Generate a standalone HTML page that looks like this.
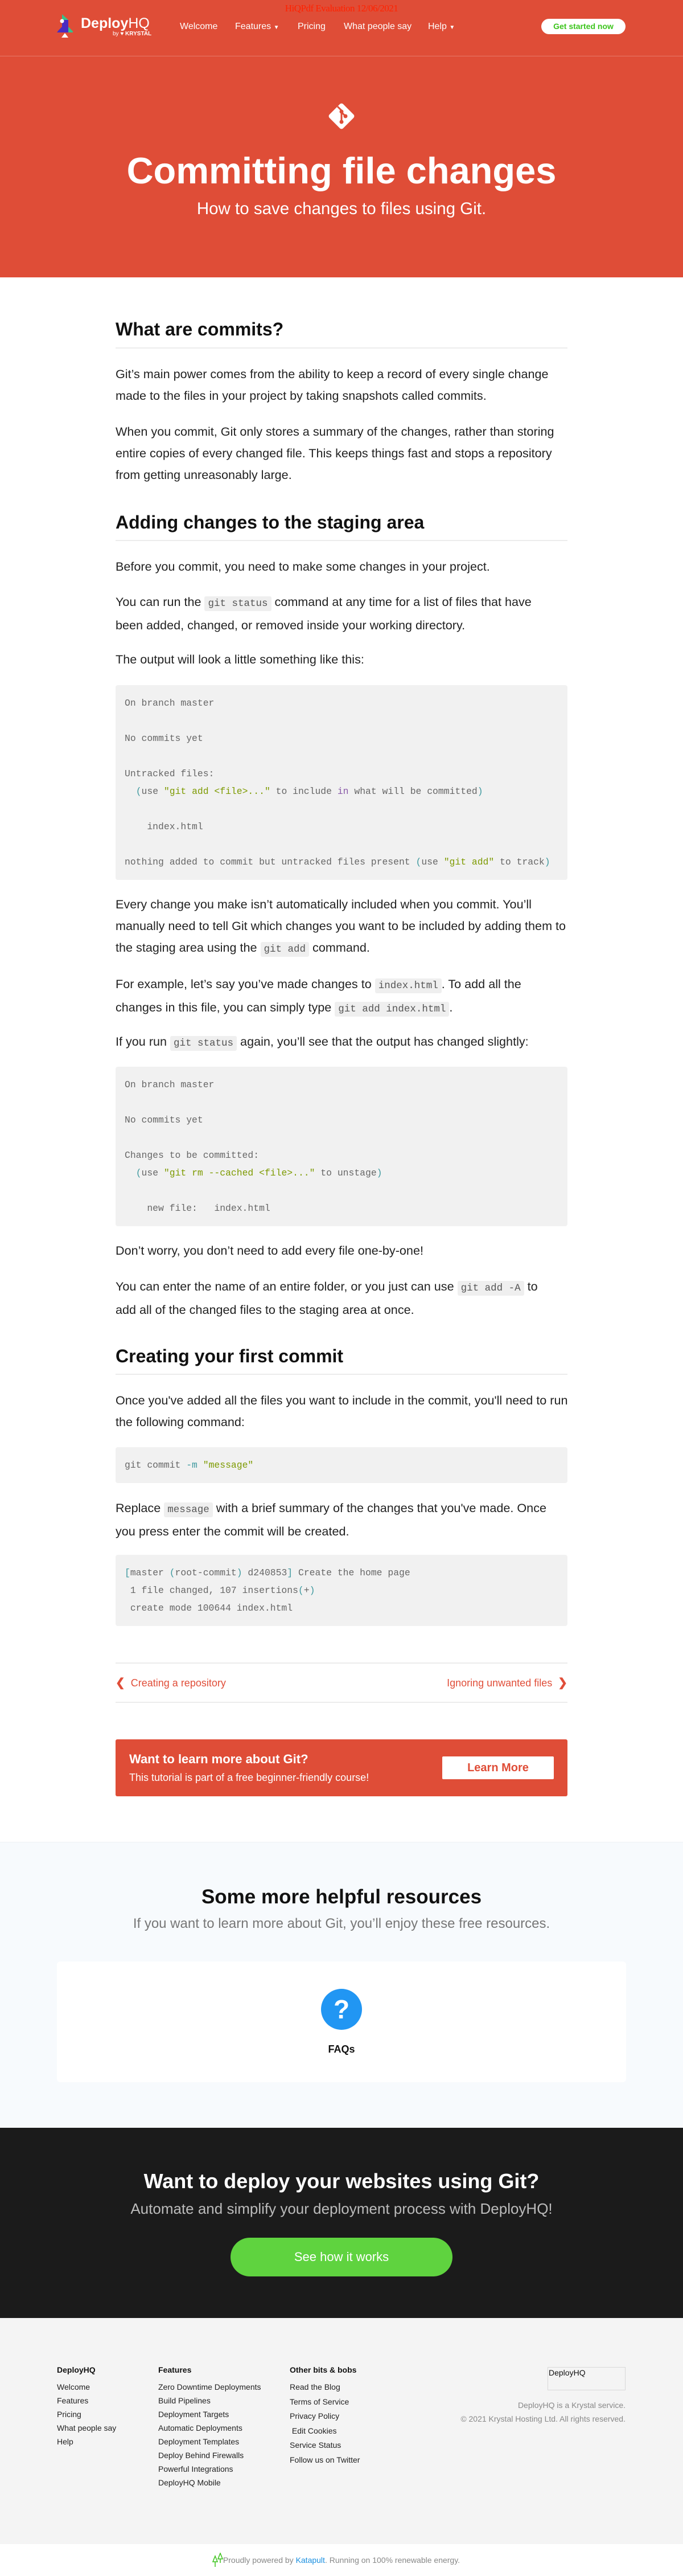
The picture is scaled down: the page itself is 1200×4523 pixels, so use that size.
<!DOCTYPE html>
<html><head><meta charset="utf-8">
<style>
*{margin:0;padding:0;box-sizing:border-box}
body{width:1200px;height:4523px;position:relative;background:#fff;font-family:"Liberation Sans",Arial,sans-serif;color:#222;overflow:hidden}
.a{position:absolute}
.hero{left:0;top:0;width:1200px;height:487px;background:#df4d37}
.nav{color:#fff;font-size:16px;top:37px;line-height:20px;white-space:nowrap}
.p{position:absolute;left:203px;width:820px;font-size:21.6px;line-height:38px;white-space:nowrap;color:#222}
.h{position:absolute;left:203px;width:794px;font-size:32px;font-weight:bold;line-height:40px;color:#111}
.hr{position:absolute;left:203px;width:794px;height:2px;background:#ececec}
.code{position:absolute;left:203px;width:794px;background:#f1f1f1;border-radius:4px;padding:16px;font-family:"Liberation Mono","DejaVu Sans Mono",monospace;font-size:16.4px;line-height:31px;color:#666;white-space:pre}
.ic{font-family:"Liberation Mono","DejaVu Sans Mono",monospace;font-size:17.5px;background:#efefef;border-radius:3px;padding:3px 6px;color:#555}
.s{color:#7d9a00}.t{color:#3e999f}.k{color:#8959a8}
.red{color:#e04e39}
.fh{font-size:14px;font-weight:bold;color:#111}
.fl{font-size:14px;color:#222;line-height:24px}
</style></head><body>

<div class="a hero"></div>
<div class="a" style="left:0;top:5px;width:1200px;text-align:center;font-family:'Liberation Serif',serif;font-size:17px;color:#ff2200;letter-spacing:-0.5px">HiQPdf Evaluation 12/06/2021</div>
<svg class="a" style="left:100px;top:25px" width="34" height="42" viewBox="0 0 34 42">
<polygon points="9,0 20,10 20,24 9,24" fill="#35c28a"/>
<polygon points="9,10 20,10 20,32 9,32" fill="#4b2bc1"/>
<polygon points="3,28 9,22 9,32 0,32" fill="#4b2bc1"/>
<polygon points="20,22 28,30 28,32 20,32" fill="#35c28a"/>
<circle cx="9" cy="12" r="3.5" fill="#fff"/>
<polygon points="14,33 20,41 8,41" fill="#fff"/>
</svg>
<div class="a" style="left:142px;top:27px;color:#fff;font-size:25px;line-height:28px;white-space:nowrap"><b>Deploy</b>HQ</div>
<div class="a" style="left:198px;top:54px;color:#fff;font-size:10px;white-space:nowrap">by <b>♥ KRYSTAL</b></div>
<div class="a nav" style="left:316px">Welcome</div>
<div class="a nav" style="left:413px">Features <span style="font-size:10px">▼</span></div>
<div class="a nav" style="left:523px">Pricing</div>
<div class="a nav" style="left:604px">What people say</div>
<div class="a nav" style="left:752px">Help <span style="font-size:10px">▼</span></div>
<div class="a" style="left:951px;top:33px;width:148px;height:27px;background:#fff;border-radius:14px;color:#3cc41c;font-weight:bold;font-size:14px;line-height:27px;text-align:center">Get started now</div>
<div class="a" style="left:0;top:98px;width:1200px;height:1px;background:rgba(255,255,255,.25)"></div>
<svg class="a" style="left:574px;top:178px" width="52" height="52" viewBox="0 0 52 52">
<rect x="9" y="9" width="34" height="34" rx="4" transform="rotate(45 26 26)" fill="#fff"/>
<path d="M19 9 L26 16 L26 38 M26 19 L33 26" stroke="#df4d37" stroke-width="3" fill="none"/>
<circle cx="26" cy="18" r="3.5" fill="#df4d37"/><circle cx="33" cy="26" r="3.5" fill="#df4d37"/><circle cx="26" cy="36" r="3.5" fill="#df4d37"/>
</svg>
<div class="a" style="left:0;top:262px;width:1200px;text-align:center;color:#fff;font-size:65px;font-weight:bold;line-height:76px">Committing file changes</div>
<div class="a" style="left:0;top:349px;width:1200px;text-align:center;color:#fff;font-size:29.5px;line-height:36px">How to save changes to files using Git.</div>

<div class="h" style="top:558px">What are commits?</div>
<div class="hr" style="top:610px"></div>
<div class="p" style="top:638px">Git’s main power comes from the ability to keep a record of every single change<br>made to the files in your project by taking snapshots called commits.</div>
<div class="p" style="top:739px">When you commit, Git only stores a summary of the changes, rather than storing<br>entire copies of every changed file. This keeps things fast and stops a repository<br>from getting unreasonably large.</div>
<div class="h" style="top:897px">Adding changes to the staging area</div>
<div class="hr" style="top:948px"></div>
<div class="p" style="top:976px">Before you commit, you need to make some changes in your project.</div>
<div class="p" style="top:1038px">You can run the <span class="ic">git status</span> command at any time for a list of files that have<br>been added, changed, or removed inside your working directory.</div>
<div class="p" style="top:1139px">The output will look a little something like this:</div>
<div class="code" style="top:1203px;height:342px">On branch master

No commits yet

Untracked files:
  <span class="t">(</span>use <span class="s">"git add &lt;file&gt;..."</span> to include <span class="k">in</span> what will be committed<span class="t">)</span>

    index.html

nothing added to commit but untracked files present <span class="t">(</span>use <span class="s">"git add"</span> to track<span class="t">)</span></div>
<div class="p" style="top:1569px">Every change you make isn’t automatically included when you commit. You’ll<br>manually need to tell Git which changes you want to be included by adding them to<br>the staging area using the <span class="ic">git add</span> command.</div>
<div class="p" style="top:1709px">For example, let’s say you’ve made changes to <span class="ic">index.html</span>. To add all the<br>changes in this file, you can simply type <span class="ic">git add index.html</span>.</div>
<div class="p" style="top:1810px">If you run <span class="ic">git status</span> again, you’ll see that the output has changed slightly:</div>
<div class="code" style="top:1873px;height:280px">On branch master

No commits yet

Changes to be committed:
  <span class="t">(</span>use <span class="s">"git rm --cached &lt;file&gt;..."</span> to unstage<span class="t">)</span>

    new file:   index.html</div>
<div class="p" style="top:2177px">Don’t worry, you don’t need to add every file one-by-one!</div>
<div class="p" style="top:2240px">You can enter the name of an entire folder, or you just can use <span class="ic">git add -A</span> to<br>add all of the changed files to the staging area at once.</div>
<div class="h" style="top:2361px">Creating your first commit</div>
<div class="hr" style="top:2412px"></div>
<div class="p" style="top:2440px">Once you've added all the files you want to include in the commit, you'll need to run<br>the following command:</div>
<div class="code" style="top:2541px;height:63px">git commit <span class="t">-m</span> <span class="s">"message"</span></div>
<div class="p" style="top:2629px">Replace <span class="ic">message</span> with a brief summary of the changes that you've made. Once<br>you press enter the commit will be created.</div>
<div class="code" style="top:2730px;height:125px"><span class="t">[</span>master <span class="t">(</span>root-commit<span class="t">)</span> d240853<span class="t">]</span> Create the home page
 1 file changed, 107 insertions<span class="t">(</span>+<span class="t">)</span>
 create mode 100644 index.html</div>

<div class="hr" style="top:2919px"></div>
<div class="a red" style="left:203px;top:2943px;font-size:18px;line-height:24px;white-space:nowrap"><b style="font-size:20px">❮</b>&nbsp; Creating a repository</div>
<div class="a red" style="left:640px;width:357px;text-align:right;top:2943px;font-size:18px;line-height:24px;white-space:nowrap">Ignoring unwanted files &nbsp;<b style="font-size:20px">❯</b></div>
<div class="hr" style="top:2988px"></div>

<div class="a" style="left:203px;top:3054px;width:794px;height:100px;background:#df4d37;border-radius:3px"></div>
<div class="a" style="left:227px;top:3075px;color:#fff;font-size:22px;font-weight:bold;line-height:28px;white-space:nowrap">Want to learn more about Git?</div>
<div class="a" style="left:227px;top:3110px;color:#fff;font-size:18px;line-height:22px;white-space:nowrap">This tutorial is part of a free beginner-friendly course!</div>
<div class="a" style="left:777px;top:3084px;width:196px;height:40px;background:#fff;border-radius:2px;color:#df4d37;font-weight:bold;font-size:20px;line-height:40px;text-align:center">Learn More</div>

<div class="a" style="left:0;top:3234px;width:1200px;height:502px;background:#f7fafd;border-top:1px solid #eef1f4"></div>
<div class="a" style="left:0;top:3310px;width:1200px;text-align:center;font-size:35px;font-weight:bold;line-height:42px;color:#111">Some more helpful resources</div>
<div class="a" style="left:0;top:3363px;width:1200px;text-align:center;font-size:24px;line-height:30px;color:#777">If you want to learn more about Git, you’ll enjoy these free resources.</div>
<div class="a" style="left:100px;top:3444px;width:1000px;height:212px;background:#fff;border-radius:6px"></div>
<div class="a" style="left:564px;top:3492px;width:72px;height:72px;border-radius:50%;background:#2196f3;color:#fff;font-size:46px;font-weight:bold;text-align:center;line-height:72px">?</div>
<div class="a" style="left:0;top:3587px;width:1200px;text-align:center;font-size:18px;font-weight:bold;line-height:22px;color:#111">FAQs</div>

<div class="a" style="left:0;top:3736px;width:1200px;height:334px;background:#1b1b1b"></div>
<div class="a" style="left:0;top:3808px;width:1200px;text-align:center;font-size:36px;font-weight:bold;line-height:44px;color:#fff">Want to deploy your websites using Git?</div>
<div class="a" style="left:0;top:3862px;width:1200px;text-align:center;font-size:26px;line-height:32px;color:#bbb">Automate and simplify your deployment process with DeployHQ!</div>
<div class="a" style="left:405px;top:3929px;width:390px;height:68px;border-radius:34px;background:#5fd33f;color:#fff;font-size:22px;line-height:68px;text-align:center">See how it works</div>

<div class="a" style="left:0;top:4070px;width:1200px;height:397px;background:#f4f4f4"></div>
<div class="a fh" style="left:100px;top:4153px">DeployHQ</div>
<div class="a fl" style="left:100px;top:4179px">Welcome<br>Features<br>Pricing<br>What people say<br>Help</div>
<div class="a fh" style="left:278px;top:4153px">Features</div>
<div class="a fl" style="left:278px;top:4179px">Zero Downtime Deployments<br>Build Pipelines<br>Deployment Targets<br>Automatic Deployments<br>Deployment Templates<br>Deploy Behind Firewalls<br>Powerful Integrations<br>DeployHQ Mobile</div>
<div class="a fh" style="left:509px;top:4153px">Other bits &amp; bobs</div>
<div class="a fl" style="left:509px;top:4179px;line-height:25.5px">Read the Blog<br>Terms of Service<br>Privacy Policy<br>&nbsp;Edit Cookies<br>Service Status<br>Follow us on Twitter</div>
<div class="a" style="left:962px;top:4156px;width:137px;height:41px;border:1px solid #d8d8d8;font-size:14px;line-height:18px;padding-left:1px;color:#111">DeployHQ</div>
<div class="a" style="left:700px;top:4211px;width:399px;text-align:right;font-size:14px;line-height:24px;color:#888">DeployHQ is a Krystal service.<br>© 2021 Krystal Hosting Ltd. All rights reserved.</div>

<svg class="a" style="left:372px;top:4482px" width="22" height="26" viewBox="0 0 22 26"><path d="M6 6 L2 16 L10 16 Z M6 16 V25 M15 1 L11 11 L19 11 Z M15 11 V18" stroke="#3cc41c" stroke-width="1.5" fill="none"/></svg>
<div class="a" style="left:0;top:4485px;width:1200px;text-align:center;font-size:14px;line-height:20px;color:#888">Proudly powered by <span style="color:#1a8fe0">Katapult</span>. Running on 100% renewable energy.</div>
</body></html>
